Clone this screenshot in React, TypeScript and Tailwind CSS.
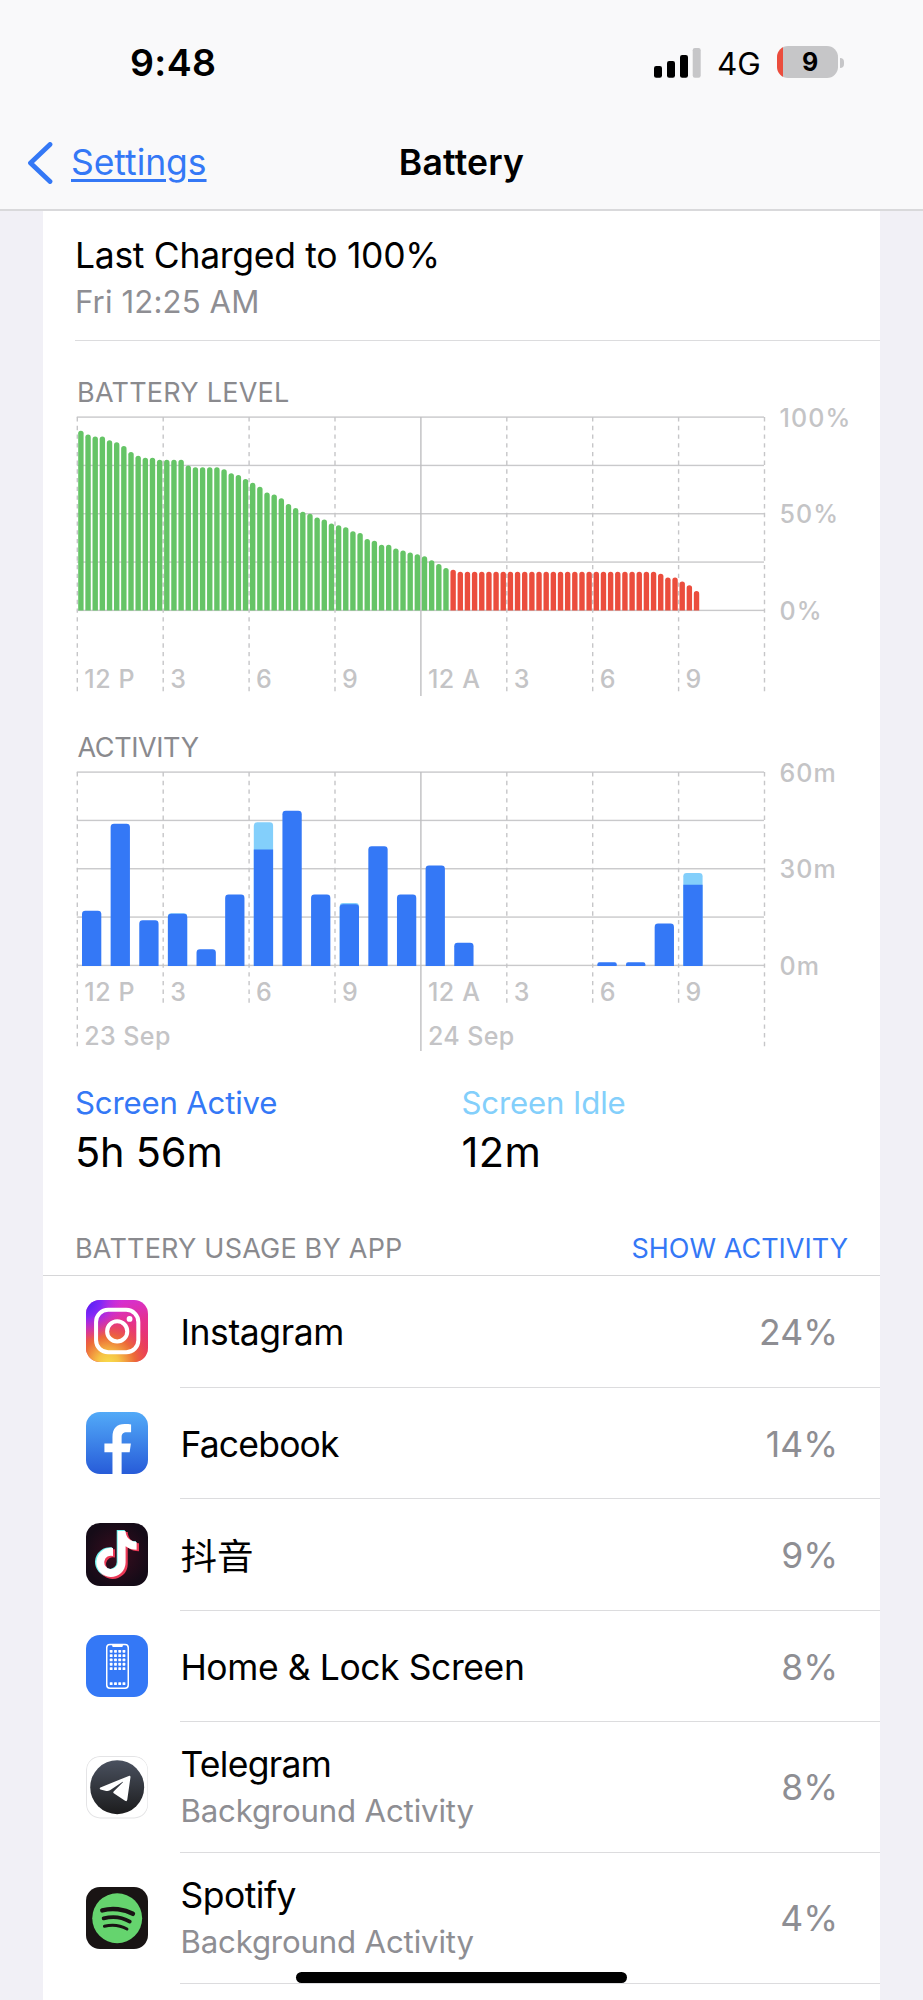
import type { ReactNode } from 'react'
import { FaTiktok } from 'react-icons/fa6'

/* ── Chart data ────────────────────────────────── */
// one value per 15 minutes, starting at 12 PM
const LEVELS = [
  93, 91, 90, 90, 88, 87, 85, 82, 80, 79, 79, 78,
  78, 78, 78, 75, 74, 74, 74, 74, 73, 71, 70, 68,
  66, 64, 61, 60, 58, 55, 53, 51, 50, 48, 47, 45,
  44, 43, 41, 40, 37, 36, 34, 34, 32, 31, 30, 29,
  28, 26, 24, 22, 21, ...Array(28).fill(20), 19, 17, 17,
  15, 13, 10,
]
const LOW_FROM = 52

// minutes per hour: [screen active, screen idle]
const ACTIVITY: [number, number][] = [
  [17, 0], [44, 0], [14, 0], [16, 0.2], [5, 0], [22, 0],
  [36, 8.4], [48, 0], [22, 0], [19, 0.4], [37, 0], [22, 0],
  [31, 0], [7, 0], [0, 0], [0, 0], [0, 0], [0, 0],
  [1, 0], [1, 0], [13, 0], [25, 3.7],
]

const HOURS = ['12 P', '3', '6', '9', '12 A', '3', '6', '9']

const LEFT = 2.3
const STEP = 85.9
const TOP = 9.1
const BOTTOM = 202.4
const HEIGHT = BOTTOM - TOP

/* ── Chart frame ───────────────────────────────── */
function Chart({ yLabels, hourY, dates, children }: {
  yLabels: string[]
  hourY: number
  dates?: [string, string]
  children: ReactNode
}) {
  return (
    <svg width="805" height="292" className="block overflow-visible">
      {[0, 1, 2, 3, 4].map((i) => (
        <rect key={i} x={LEFT - 0.5} y={TOP + (HEIGHT / 4) * i - 0.7} width={STEP * 8} height="1.4" fill="#c9c9cb" />
      ))}
      {Array.from({ length: 9 }, (_, i) => {
        const x = LEFT + STEP * i
        const solid = i === 4
        const end = solid ? 288 : i % 8 === 0 || !dates ? 284 : hourY + 3.8
        return (
          <line
            key={i}
            x1={x}
            x2={x}
            y1={TOP}
            y2={end}
            stroke={solid ? '#bfbfc1' : '#c6c6c8'}
            strokeWidth="1.4"
            strokeDasharray={solid ? undefined : '4.35 4.35'}
          />
        )
      })}
      {children}
      <g fill="#c4c4c6" fontSize="25" fontWeight="500">
        {HOURS.map((h, i) => (
          <text key={i} x={LEFT + STEP * i + 7} y={hourY} letterSpacing="0.6">{h}</text>
        ))}
        {dates?.map((d, i) => (
          <text key={d} x={LEFT + STEP * 4 * i + 7} y="281.5" letterSpacing="0.4">{d}</text>
        ))}
        {yLabels.map((l, i) => (
          <text key={l} x="704.5" y={TOP + (HEIGHT / 2) * i + 9.5} letterSpacing="1.1">{l}</text>
        ))}
      </g>
    </svg>
  )
}

function BatteryChart() {
  const pitch = STEP / 12
  return (
    <Chart yLabels={['100%', '50%', '0%']} hourY={280}>
      {LEVELS.map((v, i) => {
        const x = LEFT + pitch * i + 0.9
        const y = BOTTOM - (HEIGHT * v) / 100
        return (
          <path
            key={i}
            d={`M${x} ${BOTTOM}V${y + 2.7}a2.7 2.7 0 0 1 5.4 0V${BOTTOM}z`}
            fill={i < LOW_FROM ? '#65c466' : '#eb4d3d'}
          />
        )
      })}
    </Chart>
  )
}

function roundedTop(x: number, y: number, r: number) {
  return `M${x} ${BOTTOM + 0.6}V${y + r}q0 ${-r} ${r} ${-r}h${19.3 - r * 2}q${r} 0 ${r} ${r}V${BOTTOM + 0.6}z`
}

function ActivityChart() {
  const pitch = STEP / 3
  return (
    <Chart yLabels={['60m', '30m', '0m']} hourY={237.7} dates={['23 Sep', '24 Sep']}>
      {ACTIVITY.map(([active, idle], i) => {
        if (!active) return null
        const x = LEFT + pitch * i + 4.7
        const activeY = BOTTOM - (HEIGHT * active) / 60
        const topY = BOTTOM - (HEIGHT * (active + idle)) / 60
        return (
          <g key={i}>
            {idle > 0 && <path d={roundedTop(x, topY, 3.4)} fill="#83cffb" />}
            <path d={roundedTop(x, activeY, idle > 1 ? 0 : Math.min(3.4, active * 2))} fill="#3478f6" />
          </g>
        )
      })}
    </Chart>
  )
}

/* ── App icons ─────────────────────────────────── */
function InstagramIcon() {
  return (
    <svg viewBox="0 0 62 62" className="size-full">
      <defs>
        <linearGradient id="igBase" x1="0.3" y1="0" x2="0.5" y2="1">
          <stop offset="0" stopColor="#d42fdc" />
          <stop offset="0.45" stopColor="#e5318c" />
          <stop offset="1" stopColor="#ea3a58" />
        </linearGradient>
        <radialGradient id="igWarm" cx="0.36" cy="1.02" r="0.78">
          <stop offset="0" stopColor="#f8dc4a" />
          <stop offset="0.22" stopColor="#f6c345" />
          <stop offset="0.55" stopColor="#ec6a38" />
          <stop offset="1" stopColor="#ea3a58" stopOpacity="0" />
        </radialGradient>
        <radialGradient id="igCool" cx="0" cy="0.02" r="0.62">
          <stop offset="0" stopColor="#4b1ff5" />
          <stop offset="0.4" stopColor="#8427f6" />
          <stop offset="1" stopColor="#d42fdc" stopOpacity="0" />
        </radialGradient>
      </defs>
      <rect width="62" height="62" fill="url(#igBase)" />
      <rect width="62" height="62" fill="url(#igWarm)" />
      <rect width="62" height="62" fill="url(#igCool)" />
      <g fill="none" stroke="#fff" strokeWidth="4">
        <rect x="10" y="9.8" width="42" height="42.2" rx="12" />
        <circle cx="31" cy="31.2" r="10" />
      </g>
      <circle cx="43.3" cy="18.8" r="2.9" fill="#fff" />
    </svg>
  )
}

function FacebookIcon() {
  return (
    <svg viewBox="0 0 62 62" className="size-full">
      <defs>
        <linearGradient id="fb" x1="0" y1="0" x2="0" y2="1">
          <stop offset="0" stopColor="#52aaf8" />
          <stop offset="1" stopColor="#275bd8" />
        </linearGradient>
      </defs>
      <rect width="62" height="62" fill="url(#fb)" />
      <path
        d="M26.3 62V40h-8v-8.8h8v-6.4c0-8.4 4.4-12.8 12.2-12.8 2.6 0 4.6.1 6.3.4v7.7h-4.3c-3.7 0-5.1 1.7-5.1 5v6.1h9.2L43.4 40h-8v22z"
        fill="#fff"
      />
    </svg>
  )
}

function DouyinIcon() {
  return (
    <div className="relative size-full bg-[radial-gradient(circle,#3a0d1f_0%,#150b17_75%)]">
      <FaTiktok className="absolute top-[7px] left-[9px] h-[47px] w-[41px] text-[#6ff3ee]" />
      <FaTiktok className="absolute top-[9px] left-[11.5px] h-[47px] w-[41px] text-[#ec3a57]" />
      <FaTiktok className="absolute top-[8px] left-[10.2px] h-[46px] w-[41px] text-white" />
    </div>
  )
}

function HomeScreenIcon() {
  return (
    <svg viewBox="0 0 62 62" className="size-full">
      <rect width="62" height="62" fill="#3478f6" />
      <rect x="20.6" y="9.4" width="21.4" height="43.6" rx="3.2" fill="none" stroke="#fff" strokeWidth="1.5" />
      <path d="M26 9.2h10.6v1.6q0 1.2-1.2 1.2h-8.2q-1.2 0-1.2-1.2z" fill="#fff" />
      <g fill="#fff">
        {[16.2, 20.5, 24.8, 29.1, 33.4, 48.3].map((y) =>
          [25, 29.3, 33.5, 37.7].map((x) => (
            <rect key={`${x}-${y}`} x={x - 1.4} y={y - 1.4} width="2.8" height="2.8" rx="0.6" />
          )),
        )}
      </g>
    </svg>
  )
}

function TelegramIcon() {
  return (
    <svg viewBox="0 0 62 62" className="size-full">
      <defs>
        <linearGradient id="tg" x1="0" y1="0" x2="0" y2="1">
          <stop offset="0" stopColor="#4a515f" />
          <stop offset="1" stopColor="#1c1c1d" />
        </linearGradient>
      </defs>
      <rect x="0.5" y="0.5" width="61" height="61" rx="13.5" fill="#fff" stroke="#e4e4e6" />
      <circle cx="31" cy="31" r="26.8" fill="url(#tg)" />
      <path
        d="M14.3 31.3L42.5 19.8q1.9-.6 1.7 1.3L41 43.6q-.4 2-2.2.9L27.6 37q-1-.8-.1-1.8l9.2-9.1q.3-.7-.6-.3L23.800 34q-1.700 1.100-3.700.7l-5.700-1.500q-1.500-1-.1-1.900z"
        fill="#fff"
      />
    </svg>
  )
}

function SpotifyIcon() {
  return (
    <svg viewBox="0 0 62 62" className="size-full">
      <rect width="62" height="62" fill="#191414" />
      <circle cx="31" cy="31" r="24.8" fill="#65d46e" />
      <g fill="none" stroke="#191414" strokeLinecap="round">
        <path d="M16.2 23.3C26 20.5 38 21.9 46.6 26.6" strokeWidth="4.5" />
        <path d="M17.5 31.2C26 28.9 36 30 43.5 34.4" strokeWidth="3.7" />
        <path d="M18.3 39C26 37.2 34 38 40.7 41.7" strokeWidth="3" />
      </g>
    </svg>
  )
}

const APPS = [
  { name: 'Instagram', value: '24%', text: 'text-[35.5px] tracking-[-0.4px]', icon: <InstagramIcon /> },
  { name: 'Facebook', value: '14%', text: 'text-[35.5px] tracking-[-0.8px]', icon: <FacebookIcon /> },
  { name: '抖音', value: '9%', text: 'text-[36.5px] tracking-normal pt-[2px]', icon: <DouyinIcon /> },
  { name: 'Home & Lock Screen', value: '8%', text: 'text-[35.5px] tracking-[-0.42px]', icon: <HomeScreenIcon /> },
  { name: 'Telegram', value: '8%', text: 'text-[35.5px] tracking-[-0.7px]', icon: <TelegramIcon />, note: 'Background Activity' },
  { name: 'Spotify', value: '4%', text: 'text-[35.5px] tracking-[-0.5px]', icon: <SpotifyIcon />, note: 'Background Activity' },
]

/* ── Header ────────────────────────────────────── */
function StatusBar() {
  return (
    <div className="flex h-[46px] items-center justify-between pr-[79px] pl-[130px]">
      <span className="text-[37.5px] leading-[46px] font-semibold tracking-[0.36px]">9:48</span>
      <div className="flex items-center">
        <svg width="47" height="30" viewBox="0 0 47 30" className="block">
          <rect x="0" y="18" width="8" height="11.7" rx="2.2" />
          <rect x="13" y="13" width="8" height="16.7" rx="2.2" />
          <rect x="26" y="7" width="8" height="22.7" rx="2.2" />
          <rect x="38.7" y="0" width="8" height="29.7" rx="2.2" fill="#c6c6c8" />
        </svg>
        <span className="ml-[16px] w-[44px] pt-px text-[31.5px] leading-[46px]">4G</span>
        <div className="mb-[2px] ml-[16px] flex h-[32px] w-[61px] items-center justify-center overflow-hidden rounded-[11px] bg-[linear-gradient(90deg,#eb4d3d_6px,#c6c6c8_6px)]">
          <span className="pl-[5px] text-[25px] leading-[32px] font-bold">9</span>
        </div>
        <div className="mb-[1px] ml-[2px] h-[10px] w-[4px] rounded-r-full bg-[#c6c6c8]" />
      </div>
    </div>
  )
}

function Header() {
  return (
    <header className="h-[211px] border-b-2 border-[#d9d9db] bg-[#f9f9fa] pt-[40px]">
      <StatusBar />
      <nav className="mt-[52px] grid h-[50px] grid-cols-3 items-center">
        <div className="flex items-center pl-[27px] text-[#3478f6]">
          <svg width="26" height="42" viewBox="0 0 26 42" fill="none" className="block">
            <path d="M23 2.5L3.5 21L23 39.5" stroke="currentColor" strokeWidth="4.8" strokeLinecap="round" strokeLinejoin="round" />
          </svg>
          <a className="ml-[18px] text-[35.5px] leading-[50px] tracking-[-0.05px] underline decoration-[2.5px] underline-offset-[4px]">
            Settings
          </a>
        </div>
        <h1 className="text-center text-[35.5px] leading-[50px] font-semibold tracking-[0.2px]">Battery</h1>
      </nav>
    </header>
  )
}

export default function App() {
  return (
    <div className="relative h-[2000px] w-[923px] overflow-hidden bg-[#f1f0f6] font-['Inter','Noto_Sans_CJK_SC',sans-serif] text-black">
      <Header />

      <main className="mx-[43px] h-full bg-white">
        {/* Last charge */}
        <section className="ml-8 border-b border-[#dcdcde] pt-[23px] pb-[18px]">
          <p className="text-[35.5px] leading-[44px] tracking-[-0.3px]">Last Charged to 100%</p>
          <p className="mt-1 text-[31.2px] leading-[40px] tracking-[0.11px] text-[#8e8e93]">Fri 12:25 AM</p>
        </section>

        {/* Charts */}
        <section className="ml-8 pt-[36px] text-[#8a8a8e]">
          <h2 className="-mb-px pl-[2px] text-[27px] leading-[32px] tracking-[0.24px]">BATTERY LEVEL</h2>
          <BatteryChart />
          <h2 className="mt-[32px] -mb-px pl-[2.5px] text-[27px] leading-[32px] tracking-[-0.4px]">ACTIVITY</h2>
          <ActivityChart />
        </section>

        <section className="mt-[28px] grid grid-cols-[386.5px_1fr] pl-8">
          <div>
            <p className="text-[31.2px] leading-[40px] tracking-[-0.2px] text-[#3478f6]">Screen Active</p>
            <p className="mt-[3px] text-[41.5px] leading-[52px] tracking-[-0.2px]">5h 56m</p>
          </div>
          <div>
            <p className="text-[31.2px] leading-[40px] tracking-[-0.16px] text-[#83cffb]">Screen Idle</p>
            <p className="mt-[3px] text-[41.5px] leading-[52px] tracking-[0.4px]">12m</p>
          </div>
        </section>

        {/* Usage list */}
        <div className="mt-[55px] flex justify-between border-b border-[#d6d6d8] pr-8 pb-[10px] pl-8 text-[27px] leading-[32px]">
          <h2 className="tracking-[0.2px] text-[#8a8a8e]">BATTERY USAGE BY APP</h2>
          <button className="text-[#3478f6]">SHOW ACTIVITY</button>
        </div>
        <ul>
          {APPS.map((app) => (
            <li key={app.name} className={app.note ? 'flex h-[130.9px] pl-[43px]' : 'flex h-[111.6px] pl-[43px]'}>
              <div className="flex items-center pb-px">
                <div className="size-[62.4px] overflow-hidden rounded-[14px]">{app.icon}</div>
              </div>
              <div className="ml-[32px] flex flex-1 items-center justify-between border-b border-[#dcdcde] pr-[42px]">
                <div className={app.note ? '' : 'pt-[4px]'}>
                  <p className={`leading-[44px] ${app.text}`}>{app.name}</p>
                  {app.note && (
                    <p className="mt-[4px] text-[31.2px] leading-[40px] tracking-[-0.16px] text-[#8e8e93]">{app.note}</p>
                  )}
                </div>
                <span className={`text-[35.5px] leading-[44px] text-[#8e8e93] ${app.note ? 'pt-[2px]' : 'pt-[4px]'}`}>
                  {app.value}
                </span>
              </div>
            </li>
          ))}
        </ul>
      </main>

      {/* Home indicator floats over the list */}
      <div className="absolute top-[1972px] left-[296px] h-[11px] w-[331px] rounded-full bg-black" />
    </div>
  )
}
